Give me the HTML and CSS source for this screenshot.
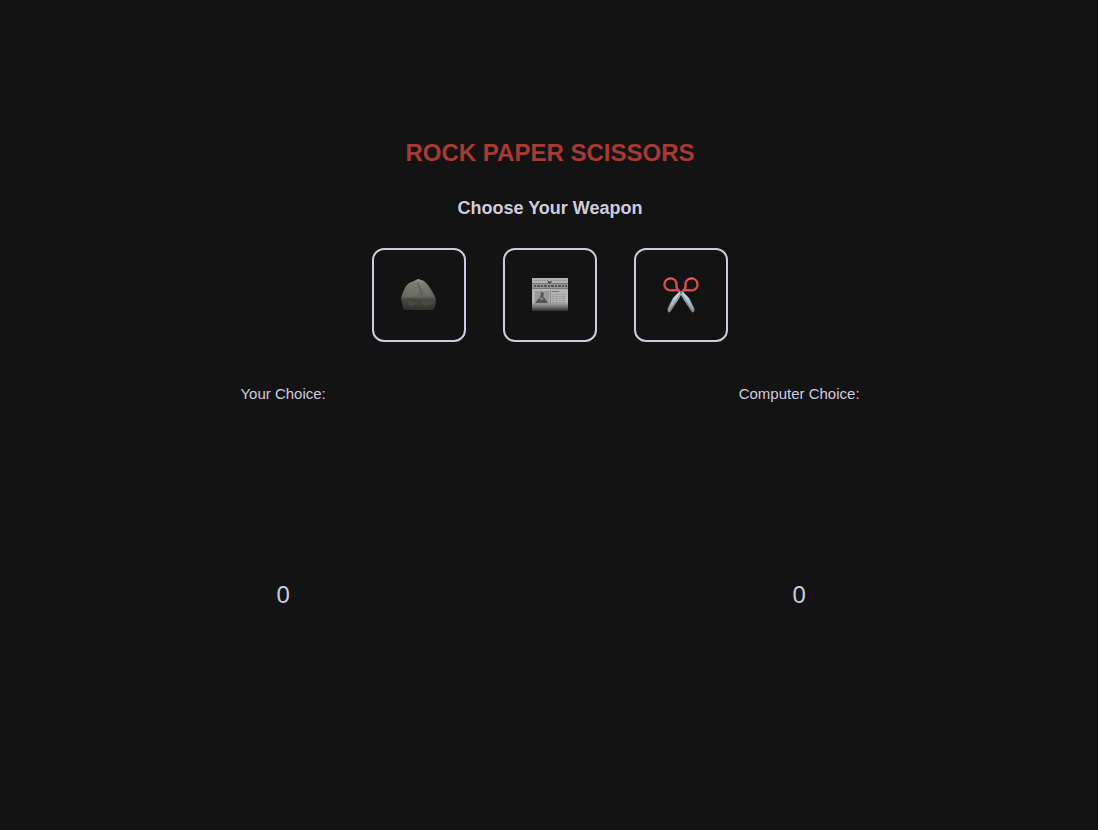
FILE: index.html
```html
<!DOCTYPE html>
<html lang="en">
<head>
<meta charset="utf-8">
<meta name="viewport" content="width=device-width, initial-scale=1">
<title>Rock Paper Scissors</title>
<link rel="stylesheet" href="styles.css">
</head>
<body>
<main class="game">
  <h1 class="title">ROCK PAPER SCISSORS</h1>
  <h2 class="subtitle">Choose Your Weapon</h2>
  <div class="weapons">
    <button class="weapon" type="button" aria-label="Rock">
      <svg class="icon" viewBox="0 0 38 38" aria-hidden="true">
        <defs>
          <linearGradient id="rock" x1="0" y1="0" x2="0" y2="1"><stop offset="0" stop-color="#85857b"/><stop offset=".55" stop-color="#66665f"/><stop offset=".66" stop-color="#484942"/><stop offset="1" stop-color="#30312c"/></linearGradient>
        </defs>
        <path fill="url(#rock)" d="M5 34 3 32 1 22 3 16 6 10 9 7 14 5 18 3 24 5 28 9 32 15 36 23 35 31 33 34Z"/>
        <path fill="#96968b" opacity=".6" d="M14 6 18 3 24 5 22 7 18 6Z"/>
        <path fill="#77776d" opacity=".4" d="M8 10 15 7 18 13 14 21H5L7 15ZM23 9 27 11 31 20 26 21Z"/>
        <path fill="#41423b" opacity=".35" d="M18 5 20 10 23 19H21L20 14 17 9ZM1 23 10 22 19 23 36 23 35 25 23 25 17 26 8 24 1 25Z"/>
        <path fill="#64655c" opacity=".3" d="M8 25 17 27 12 30 8 29ZM21 26 33 25 31 29 24 30Z"/>
      </svg>
    </button>
    <button class="weapon" type="button" aria-label="Paper">
      <svg class="icon" viewBox="0 0 38 38" aria-hidden="true">
        <defs>
          <linearGradient id="sheet" x1="0" y1="0" x2="0" y2="1"><stop offset="0" stop-color="#b2b2b2"/><stop offset=".72" stop-color="#b4b4b4"/><stop offset=".86" stop-color="#7c7c7c"/><stop offset="1" stop-color="#2c2c2c"/></linearGradient>
        </defs>
        <path fill="url(#sheet)" d="M1 2H37V35H1Z"/>
        <path stroke="#9b9b9b" d="M2 4.500H15M22 4.500H36"/>
        <path fill="#333" d="M16 4 19 6 21 4 20 7 18 8Z"/>
        <path fill="#777" d="M1 7H37V8H1ZM1 12H37V13H1Z"/>
        <path fill="#979797" d="M1 8H37V12H1Z"/>
        <path stroke="#555" stroke-width="2" stroke-dasharray="2 1 3 1" d="M3 10H36"/>
        <path fill="#999" d="M4 15H18V28H4Z"/>
        <path fill="#545454" d="M4 27 9 21 10 18 9 17 12 16 13 18 12 20 17 27Z"/>
        <path fill="#bbb" opacity=".5" d="M10 21 13 23 11 24 8 23Z"/>
        <path stroke="#888" d="M19.500 14V30"/>
        <path stroke="#777" d="M21 15.500H28"/>
        <path stroke="#999" stroke-dasharray="2 1 3 1" d="M21 18.500H35M21 20.500H35M21 22.500H35M21 24.500H35M21 26.500H35"/>
        <path stroke="#777" opacity=".6" d="M3 30.500H18M21 30.500H35"/>
      </svg>
    </button>
    <button class="weapon" type="button" aria-label="Scissors">
      <svg class="icon" viewBox="0 0 38 38" aria-hidden="true">
        <defs>
          <linearGradient id="blade" x1="0" y1="0" x2="0" y2="1"><stop offset="0" stop-color="#dce9f0"/><stop offset=".6" stop-color="#9ebbd0"/><stop offset="1" stop-color="#8d8987"/></linearGradient>
        </defs>
        <path fill="url(#blade)" stroke="#68757f" stroke-width=".4" d="M18 15 20 17 16 24 8 36Q5 37 6 32L11 22Z"/>
        <path fill="url(#blade)" stroke="#68757f" stroke-width=".4" d="M20 15 18 17 22 24 30 36Q33 37 32 32L27 22Z"/>
        <path stroke="#88776d" stroke-width=".8" fill="none" d="M18 18 8 35M20 18 30 35"/>
        <g fill="none" stroke="#df4c50" stroke-width="2.400" stroke-linejoin="round">
          <path d="M17 15C14 13 14.500 11 14.500 8.500A6 6 0 1 0 7 14.200C11 15 13 13 17 15Z"/>
          <path d="M21 15C24 13 23.500 11 23.500 8.500A6 6 0 1 1 31 14.200C27 15 25 13 21 15Z"/>
        </g>
        <path fill="none" stroke="#f28282" stroke-width=".6" d="M3 6Q5 2.500 9 2.500M25 5Q27 2 31 2.500"/>
        <circle cx="19" cy="17" r="1.300" fill="#6d8798"/>
      </svg>
    </button>
  </div>
  <div class="players">
    <section class="player">
      <p class="label">Your Choice:</p>
      <div class="choice"></div>
      <p class="score">0</p>
    </section>
    <section class="player">
      <p class="label">Computer Choice:</p>
      <div class="choice"></div>
      <p class="score">0</p>
    </section>
  </div>
</main>
</body>
</html>
```
FILE: styles.css
```css
* {
  box-sizing: border-box;
  margin: 0;
}

body {
  min-height: 100vh;
  background: #131313;
  color: #cfcbdf;
  font-family: "Liberation Sans", Arial, sans-serif;
}

.game {
  display: flex;
  flex-direction: column;
  align-items: center;
  padding: 139px 32px 32px 34px;
}

.title {
  color: #a63a35;
  font-size: 24px;
  line-height: 28px;
}

.subtitle {
  margin-top: 30px;
  font-size: 18px;
  line-height: 22px;
}

.weapons {
  display: flex;
  gap: 37px;
  margin-top: 29px;
}

.weapon {
  display: grid;
  place-items: center;
  width: 94px;
  height: 94px;
  padding: 0;
  border: 2px solid #cfcbdf;
  border-radius: 12px;
  background: transparent;
  cursor: pointer;
}

.icon {
  width: 38px;
  height: 38px;
}

.players {
  display: flex;
  justify-content: space-around;
  width: 100%;
  margin-top: 43px;
}

.player {
  display: flex;
  flex-direction: column;
  align-items: center;
}

.label {
  font-size: 15px;
  line-height: 18px;
}

.choice {
  height: 178px;
}

.score {
  font-size: 24px;
  line-height: 28px;
}
```
